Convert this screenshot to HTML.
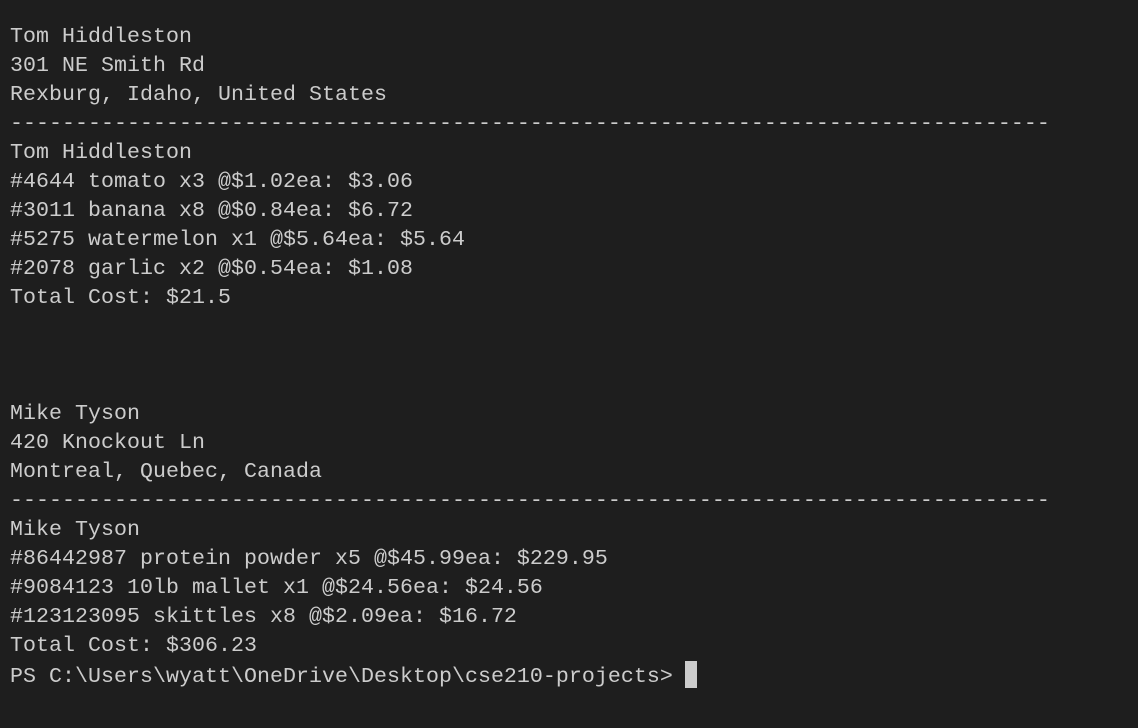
<!DOCTYPE html>
<html><head><meta charset="utf-8"><style>
html,body{margin:0;padding:0;background:#1e1e1e;width:1138px;height:728px;overflow:hidden}
pre{margin:0;position:absolute;left:10px;top:23px;font-family:"Liberation Mono",monospace;font-size:21.6px;line-height:29px;color:#cccccc;letter-spacing:0.04px}
.cur{display:inline-block;width:12px;height:27px;background:#cccccc;vertical-align:-6px;margin-left:-1px}
</style></head><body><pre>Tom Hiddleston
301 NE Smith Rd
Rexburg, Idaho, United States
--------------------------------------------------------------------------------
Tom Hiddleston
#4644 tomato x3 @$1.02ea: $3.06
#3011 banana x8 @$0.84ea: $6.72
#5275 watermelon x1 @$5.64ea: $5.64
#2078 garlic x2 @$0.54ea: $1.08
Total Cost: $21.5



Mike Tyson
420 Knockout Ln
Montreal, Quebec, Canada
--------------------------------------------------------------------------------
Mike Tyson
#86442987 protein powder x5 @$45.99ea: $229.95
#9084123 10lb mallet x1 @$24.56ea: $24.56
#123123095 skittles x8 @$2.09ea: $16.72
Total Cost: $306.23
PS C:\Users\wyatt\OneDrive\Desktop\cse210-projects&gt; <span class="cur"></span></pre></body></html>
